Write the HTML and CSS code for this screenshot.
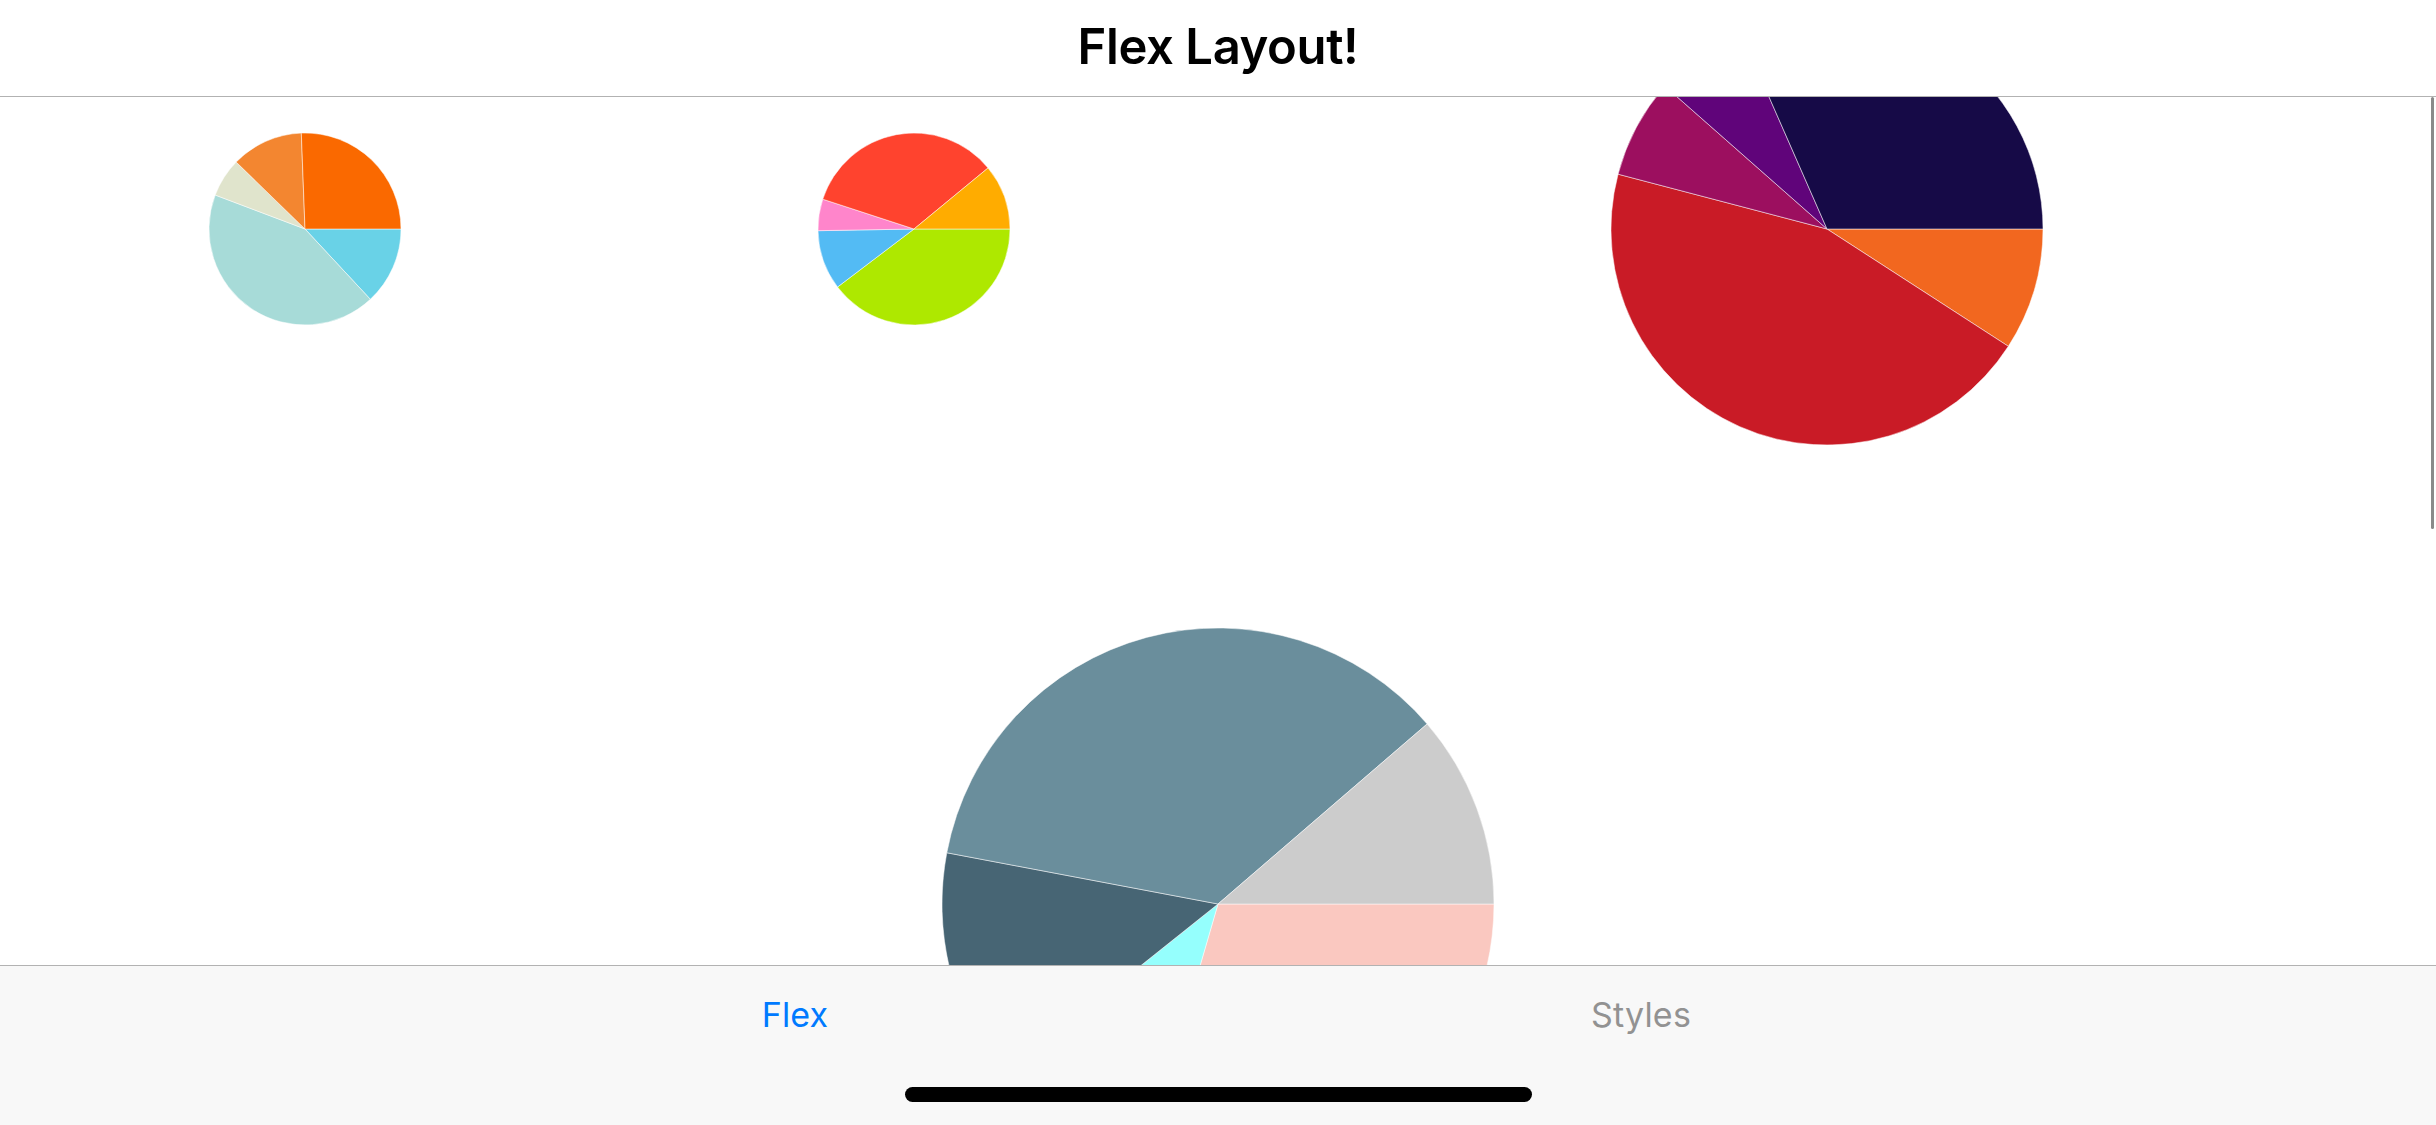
FILE: index.html
```html
<!DOCTYPE html>
<html lang="en">
<head>
<meta charset="utf-8">
<title>Flex Layout!</title>
<link rel="stylesheet" href="styles.css">
</head>
<body>
<div class="app">
  <header class="nav">
    <h1 class="nav-title">Flex Layout!</h1>
  </header>
  <main class="content">
    <div class="scroll">
      <div class="row row-top">
        <div class="cell">
          <svg class="pie pie-sm" viewBox="-1 -1 2 2">
            <path fill="#69D2E7" d="M0 0 L1 0 A1 1 0 0 1 0.6807 0.7325 Z"/>
            <path fill="#A7DBD8" d="M0 0 L0.6807 0.7325 A1 1 0 0 1 -0.9354 -0.3535 Z"/>
            <path fill="#E0E4CC" d="M0 0 L-0.9354 -0.3535 A1 1 0 0 1 -0.7169 -0.6972 Z"/>
            <path fill="#F38630" d="M0 0 L-0.7169 -0.6972 A1 1 0 0 1 -0.0384 -0.9993 Z"/>
            <path fill="#FA6900" d="M0 0 L-0.0384 -0.9993 A1 1 0 0 1 1 0 Z"/>
          </svg>
        </div>
        <div class="cell">
          <svg class="pie pie-sm" viewBox="-1 -1 2 2">
            <path fill="#AEE800" d="M0 0 L1 0 A1 1 0 0 1 -0.7965 0.6046 Z"/>
            <path fill="#53BBF4" d="M0 0 L-0.7965 0.6046 A1 1 0 0 1 -0.9998 0.0175 Z"/>
            <path fill="#FF85CB" d="M0 0 L-0.9998 0.0175 A1 1 0 0 1 -0.9505 -0.3107 Z"/>
            <path fill="#FF432E" d="M0 0 L-0.9505 -0.3107 A1 1 0 0 1 0.7716 -0.6361 Z"/>
            <path fill="#FFAC00" d="M0 0 L0.7716 -0.6361 A1 1 0 0 1 1 0 Z"/>
          </svg>
        </div>
        <div class="cell cell-wide">
          <svg class="pie pie-md" viewBox="-1 -1 2 2">
            <path fill="#F2671F" d="M0 0 L1 0 A1 1 0 0 1 0.8396 0.5432 Z"/>
            <path fill="#C91B26" d="M0 0 L0.8396 0.5432 A1 1 0 0 1 -0.9673 -0.2538 Z"/>
            <path fill="#9C0F5F" d="M0 0 L-0.9673 -0.2538 A1 1 0 0 1 -0.7501 -0.6613 Z"/>
            <path fill="#60047A" d="M0 0 L-0.7501 -0.6613 A1 1 0 0 1 -0.4019 -0.9157 Z"/>
            <path fill="#160A47" d="M0 0 L-0.4019 -0.9157 A1 1 0 0 1 1 0 Z"/>
          </svg>
        </div>
      </div>
      <div class="row row-bottom">
        <svg class="pie pie-lg" viewBox="-1 -1 2 2">
          <path fill="#FAC8C0" d="M0 0 L1 0 A1 1 0 0 1 -0.2790 0.9603 Z"/>
          <path fill="#95FFFD" d="M0 0 L-0.2790 0.9603 A1 1 0 0 1 -0.7815 0.6239 Z"/>
          <path fill="#476574" d="M0 0 L-0.7815 0.6239 A1 1 0 0 1 -0.9826 -0.1857 Z"/>
          <path fill="#6A8E9C" d="M0 0 L-0.9826 -0.1857 A1 1 0 0 1 0.7578 -0.6525 Z"/>
          <path fill="#CCCCCC" d="M0 0 L0.7578 -0.6525 A1 1 0 0 1 1 0 Z"/>
        </svg>
      </div>
    </div>
    <div class="scroll-indicator"></div>
  </main>
  <footer class="tabbar">
    <nav class="tabs">
      <div class="tab tab-active">Flex</div>
      <div class="tab">Styles</div>
    </nav>
    <div class="home-area">
      <div class="home-indicator"></div>
    </div>
  </footer>
</div>
</body>
</html>
```

FILE: styles.css
```css
html, body {
  margin: 0;
  padding: 0;
  background: #ffffff;
}

body {
  width: 2436px;
  height: 1125px;
  overflow: hidden;
  font-family: Inter, "Liberation Sans", Arial, sans-serif;
}

.app {
  width: 2436px;
  height: 1125px;
  display: flex;
  flex-direction: column;
}

.nav {
  box-sizing: border-box;
  height: 97px;
  flex: 0 0 97px;
  border-bottom: 1px solid #b2b2b2;
  background: #ffffff;
  display: flex;
  align-items: center;
  justify-content: center;
}

.nav-title {
  margin: 0;
  font-size: 49px;
  font-weight: 600;
  letter-spacing: -0.4px;
  color: #000000;
  line-height: 1;
  padding-bottom: 4px;
}

.content {
  position: relative;
  flex: 1 1 auto;
  overflow: hidden;
  background: #ffffff;
}

.scroll {
  display: flex;
  flex-direction: column;
}

.row-top {
  height: 264px;
  display: grid;
  grid-template-columns: 1fr 1fr 2fr;
  align-items: center;
}

.cell {
  display: flex;
  justify-content: center;
  align-items: center;
  height: 264px;
}

.row-bottom {
  padding-top: 267px;
  display: flex;
  justify-content: center;
}

.pie {
  display: block;
  flex: none;
  overflow: visible;
}

.pie path {
  stroke: #ffffff;
  stroke-width: 0.5px;
  vector-effect: non-scaling-stroke;
  stroke-linejoin: round;
}

.pie-sm {
  width: 192px;
  height: 192px;
}

.pie-md {
  width: 432px;
  height: 432px;
}

.pie-lg {
  width: 552px;
  height: 552px;
}

.scroll-indicator {
  position: absolute;
  top: 0;
  right: 2px;
  width: 3px;
  height: 432px;
  background: #8a8a8a;
  border-radius: 2px;
}

.tabbar {
  box-sizing: border-box;
  height: 160px;
  flex: 0 0 160px;
  border-top: 1px solid #b2b2b2;
  background: #f8f8f8;
  display: flex;
  flex-direction: column;
}

.tabs {
  height: 96px;
  display: flex;
  justify-content: center;
}

.tab {
  width: 846px;
  display: flex;
  align-items: center;
  justify-content: center;
  font-size: 34px;
  font-weight: 400;
  color: #929292;
  letter-spacing: 0.2px;
}

.tab-active {
  color: #007aff;
}

.home-area {
  flex: 1 1 auto;
  display: flex;
  justify-content: center;
  padding-top: 25px;
}

.home-indicator {
  width: 627px;
  height: 15px;
  border-radius: 8px;
  background: #000000;
}
```
